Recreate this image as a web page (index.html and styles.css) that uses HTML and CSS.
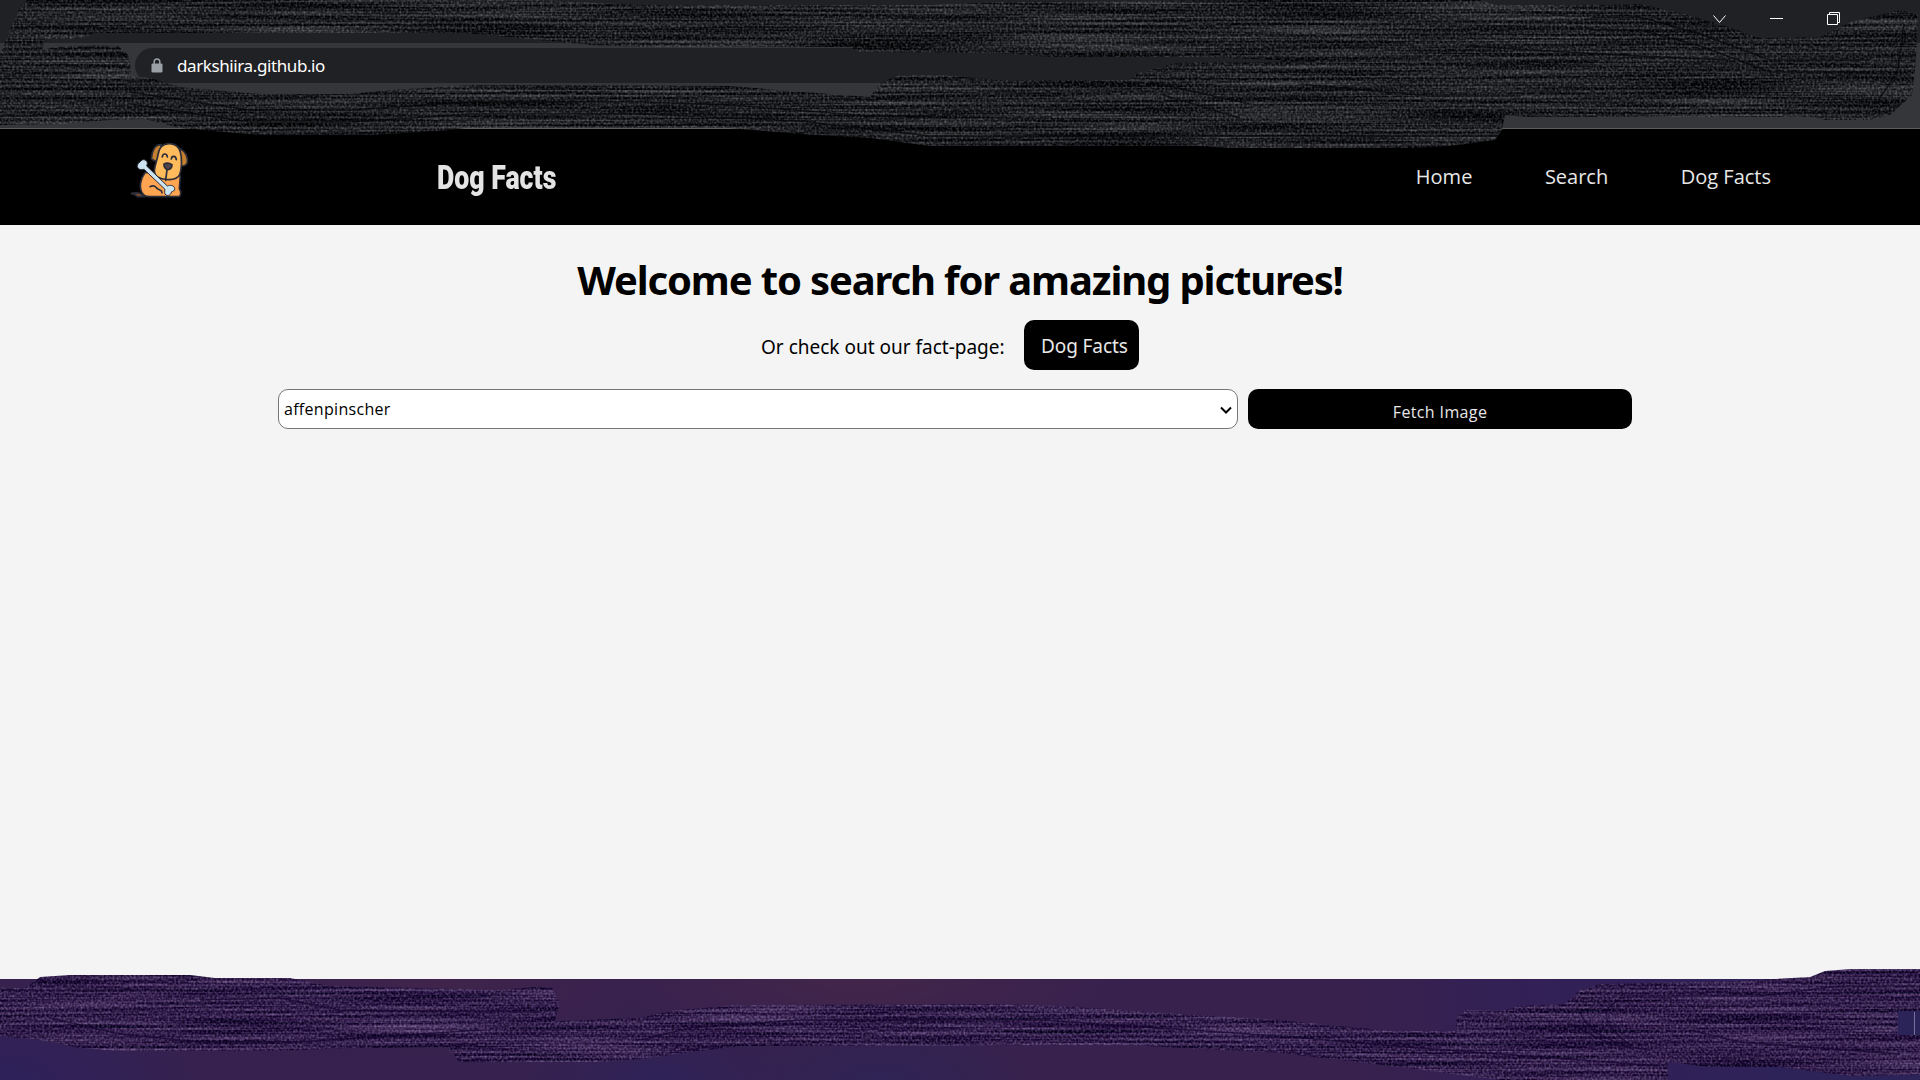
FILE: index.html
```html
<!DOCTYPE html>
<html lang="en">
<head>
<meta charset="utf-8">
<title>Dog Facts</title>
<link rel="stylesheet" href="styles.css">
</head>
<body>
<div class="screen">
  <div class="tabstrip">
    <svg class="window-controls" width="140" height="24" viewBox="0 0 140 24" fill="none" stroke="#fff">
      <path d="M1.5 8.5l6 7 6-7" stroke-width="1"/>
      <path d="M58 11.5h13"/>
      <path d="M115.5 7.500h10v10h-10zM117.500 7.500v-2h10v10h-2"/>
    </svg>
  </div>
  <div class="toolbar">
    <div class="omnibox">
      <svg class="lock" width="12" height="15" viewBox="0 0 12 15"><path d="M3.200 6V3.800a2.800 2.800 0 0 1 5.600 0V6" fill="none" stroke="#9aa0a6" stroke-width="1.500"/><rect x=".5" y="5.500" width="11" height="9" rx="1.300" fill="#9aa0a6"/></svg>
      <span class="url">darkshiira.github.io</span>
    </div>
  </div>
  <header class="header">
    <svg class="logo" width="100" height="80" viewBox="0 0 300 240" stroke="#2b2d38" stroke-width="5" stroke-linejoin="round" stroke-linecap="round">
      <path d="M64 190q16-3 26 0 8 5 14 10H82q-4-7-18-10z" fill="#8a4e2c"/>
      <path d="M105 128c-14 18-18 44-9 60 5 9 12 12 22 12h90c7-9 4-18 0-24l3-38-40-12z" fill="#ffa450"/>
      <path d="M120 170c12-6 16 0 22 6 7 6 14 2 14 12" fill="none"/>
      <path d="M154 44c-20-2-28 20-30 42 8 9 17 8 24 4z" fill="#c5802f"/>
      <path d="M210 56c18 8 24 28 22 42-4 10-14 12-22 8z" fill="#c5802f"/>
      <path d="M180 41c-22-1-34 14-36 34-4 22-14 40-10 54 6 22 64 28 75 5 6-16 8-48 2-68-4-16-16-24-31-25z" fill="#ffbb5c"/>
      <path d="M157 81c1-12 14-12 15 0M184 87c1-11 14-11 15 2" fill="none"/>
      <path d="M162 102q12-6 24 2 0 13-13 15-12-4-11-17zM171 119l-4 32" fill="#51454a"/>
      <path d="M86 99c8-5 10-13 19-9 8 4 8 10 5 18l62 60c8-4 20-2 22 7 2 8-7 9-10 11-1 8-9 13-16 9-6-4-4-11-3-17l-63-60c-8 3-19 0-20-8 0-4 1-8 4-11z" fill="#cce4ef" stroke-width="3"/>
    </svg>
    <div class="brand">Dog Facts</div>
    <nav class="nav">
      <a>Home</a>
      <a>Search</a>
      <a>Dog Facts</a>
    </nav>
  </header>
  <main class="main">
    <h1 class="title">Welcome to search for amazing pictures!</h1>
    <div class="facts">
      <span class="facts-text">Or check out our fact-page:</span>
      <a class="facts-button">Dog Facts</a>
    </div>
    <form class="search">
      <div class="breed-field">
        <select class="breed"><option>affenpinscher</option></select>
        <svg class="chevron" width="12" height="8" viewBox="0 0 12 8"><path d="M1 1.500l5 5 5-5" fill="none" stroke="#000" stroke-width="2"/></svg>
      </div>
      <button class="fetch" type="button">Fetch Image</button>
    </form>
  </main>
  <footer class="taskbar"></footer>

  <svg class="smudges" width="1920" height="1080" viewBox="0 0 1920 1080">
    <defs>
      <filter id="grain-dark" filterUnits="userSpaceOnUse" x="0" y="0" width="1920" height="160" color-interpolation-filters="sRGB">
        <feTurbulence type="fractalNoise" baseFrequency="0.005 0.41" numOctaves="2" seed="4" result="streak"/>
        <feColorMatrix in="streak" values="0 0 0 .42 -.14  0 0 0 .42 -.14  0 0 0 .42 -.13  0 0 0 0 1" result="s"/>
        <feTurbulence type="fractalNoise" baseFrequency="0.47 0.43" numOctaves="1" seed="9"/>
        <feColorMatrix values="0 0 0 .5 -.2  0 0 0 .5 -.195  0 0 0 .5 -.19  0 0 0 0 1" result="d"/>
        <feComposite in="s" in2="d" operator="arithmetic" k2="1" k3="1"/>
        <feComposite in2="SourceGraphic" operator="in"/>
      </filter>
      <filter id="grain-purple" filterUnits="userSpaceOnUse" x="0" y="960" width="1920" height="120" color-interpolation-filters="sRGB">
        <feTurbulence type="fractalNoise" baseFrequency="0.006 0.39" numOctaves="2" seed="7" result="streak"/>
        <feColorMatrix in="streak" values="0 0 0 .42 -.08  0 0 0 .4 -.14  0 0 0 .42 -.04  0 0 0 0 1" result="s"/>
        <feTurbulence type="fractalNoise" baseFrequency="0.47 0.43" numOctaves="1" seed="3"/>
        <feColorMatrix values="0 0 0 .5 -.18  0 0 0 .5 -.19  0 0 0 .5 -.12  0 0 0 0 1" result="d"/>
        <feComposite in="s" in2="d" operator="arithmetic" k2="1" k3="1"/>
        <feComposite in2="SourceGraphic" operator="in"/>
      </filter>
    </defs>
    <path filter="url(#grain-dark)" fill-rule="evenodd" d="M27 0H540L640 5H930L1000 2L1280 0H1480L1495 5H1590L1640 4L1680 13L1720 24L1760 38L1820 37L1850 22L1900 10L1918 15L1916 60L1912 95L1890 115L1870 120H1825L1815 117H1530L1505 115L1502 130L1495 140L1450 146L1410 148H1230L1200 146H930L870 138L800 134L730 128H465L440 131L370 135H260L180 128L145 119L110 120L60 124L0 125V55L10 30L18 10ZM45 39L42 50L55 47L90 45L118 46L128 55L131 68L130 76L150 78L180 87L260 94H350L390 90L470 85H640L730 86L790 91L870 97L880 83L900 75H940L1000 80H1130L1135 74L1180 62H1280V60L1200 57H1050L1000 53L860 52L850 47H640L590 45L530 39L465 33H95L80 39Z"/>
    <path filter="url(#grain-purple)" fill-rule="evenodd" d="M0 987L25 988L40 977L70 975H190L215 978H290L330 986L500 990L535 987L552 988L560 1003L555 1021L640 1018L670 1011L735 1005L1000 1004L1060 1006L1280 1020L1390 1031H1456V1018L1465 1010L1500 1011L1520 1006L1565 1004L1580 990L1600 984L1740 981L1810 977L1825 971L1850 969H1920V1075L1850 1076L1780 1067H1710L1668 1062V1080H1500L1400 1067L1280 1053L1180 1048L1130 1045L740 1046L700 1051L640 1059L600 1062H460L448 1050L450 1047L350 1048L270 1051H120L80 1048L40 1040L0 1036ZM1898 1011V1035H1920V1011Z"/>
    <g class="grooves grooves-dark">
      <path d="M130 92L180 100L250 110H350L470 102H640L730 105L870 116H930M130 104L250 122H350L470 114H640L800 121L930 136H1500"/>
      <path d="M1590 18L1640 17L1700 34L1770 60H1870M1590 30L1640 30L1700 46L1770 72H1870M1150 82L1250 104M1160 94L1240 118M1300 84L1430 96H1520M1470 46L1530 50L1640 56L1730 60M1904 24L1898 70L1880 98"/>
    </g>
    <g class="grooves grooves-purple">
      <path d="M50 1018L120 1034L200 1042H300L480 1030M200 1000L280 998L340 1010L540 1012M640 1040L690 1028L800 1020H1040L1280 1036L1420 1048L1660 1066M1570 1024L1610 1044L1650 1050M1580 1012Q1588 1036 1630 1046M1620 1000Q1590 1012 1626 1042M1690 1030L1740 1042L1900 1054M1620 996H1760L1840 986H1915"/>
    </g>
    <path d="M1914.500 1012v23" stroke="#77719a"/>
  </svg>
</div>
</body>
</html>
```
FILE: styles.css
```css
* { box-sizing: border-box; }
body { margin: 0; overflow: hidden; font-family: "Open Sans", "Noto Sans", sans-serif; }
.screen { position: relative; width: 1920px; height: 1080px; display: flex; flex-direction: column; background: #f4f4f4; }

.tabstrip { height: 43px; background: #202124; display: flex; justify-content: flex-end; align-items: flex-start; padding: 7px 68px 0 0; }
.toolbar { height: 86px; background: #35363a; border-bottom: 1px solid #5d5e62; padding: 5px 300px 0 135px; }
.omnibox { height: 35px; border-radius: 18px; background: #202124; display: flex; align-items: center; padding-left: 16px; gap: 14px; }
.url { font-family: "Noto Sans", sans-serif; font-size: 17px; letter-spacing: -0.4px; color: #fff; }

.header { height: 96px; background: #000; color: #e8e8e8; display: flex; align-items: flex-start; padding-left: 110px; }
.logo { margin-top: 1px; flex: none; }
.brand { font-family: Roboto, sans-serif; font-weight: 900; font-size: 34px; line-height: 40px; color: #e4e4e4; margin: 28px 0 0 227px; width: 120px; white-space: nowrap; transform: scaleX(.785); transform-origin: left; }
.nav { margin: 34px 149px 0 auto; display: flex; gap: 72.5px; font-size: 20px; line-height: 28px; }

.main { height: 754px; display: flex; flex-direction: column; align-items: center; }
.title { margin: 27px 0 0; font-family: "Noto Sans", sans-serif; font-size: 40px; line-height: 56px; font-weight: 700; letter-spacing: -1.14px; color: #000; white-space: nowrap; }
.facts { display: flex; align-items: center; align-self: flex-start; gap: 20px; margin: 12px 0 0 761px; height: 50px; }
.facts-text { font-family: "Noto Sans", sans-serif; font-size: 19px; width: 243px; padding-top: 3px; white-space: nowrap; color: #000; }
.facts-button { width: 115px; height: 50px; border-radius: 10px; background: #000; color: #e8e8e8; font-family: "Noto Sans", sans-serif; font-size: 19px; line-height: 52px; letter-spacing: -0.1px; padding-left: 17px; white-space: nowrap; }
.search { display: flex; gap: 10px; margin: 19px 288px 0 278px; align-self: stretch; }
.breed-field { position: relative; width: 960px; height: 40px; }
.breed { appearance: none; width: 100%; height: 100%; border: 1px solid #767676; border-radius: 10px; background: #fff; font: 16px "Open Sans", sans-serif; letter-spacing: .3px; color: #000; padding: 0 20px 0 5px; }
.chevron { position: absolute; right: 6px; top: 17px; pointer-events: none; }
.fetch { width: 384px; height: 40px; border: 0; border-radius: 10px; background: #000; color: #e8e8e8; font: 16px/22px "Open Sans", sans-serif; letter-spacing: .37px; padding: 5px 0 0; }

.taskbar { height: 101px; background:
  radial-gradient(ellipse 260px 70px at 860px 0, #43264a, transparent),
  radial-gradient(ellipse 220px 80px at 440px 0, #40244b, transparent),
  radial-gradient(ellipse 200px 80px at 0 100%, #2d215b, transparent),
  radial-gradient(ellipse 150px 60px at 660px 100%, #2e2257, transparent),
  radial-gradient(ellipse 150px 60px at 880px 100%, #2e2455, transparent),
  linear-gradient(90deg, #36214f 0, #38214d 70%, #322056 80%, #2b2459 100%); }

/* scribbled-over areas lie on top of the window and the taskbar */
.smudges { position: absolute; left: 0; top: 0; pointer-events: none; }
.grooves { fill: none; stroke-width: 1.5; stroke-linejoin: round; stroke-opacity: .7; }
.grooves-dark { stroke: #060607; }
.grooves-purple { stroke: #16052f; }
```
